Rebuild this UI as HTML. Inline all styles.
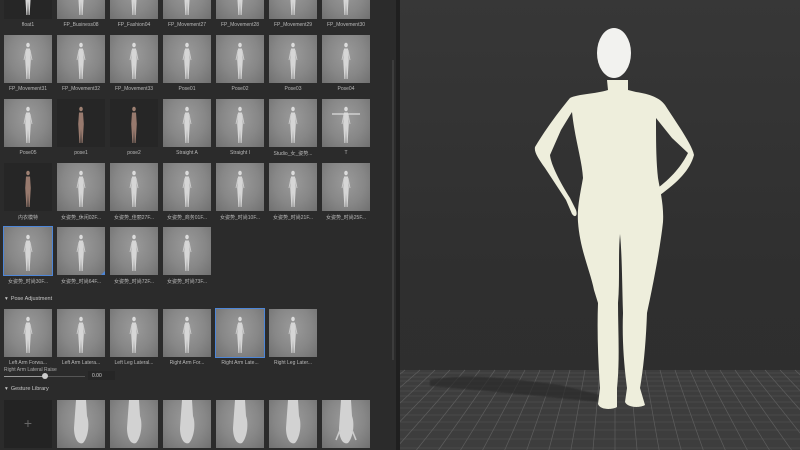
<!DOCTYPE html>
<html><head><meta charset="utf-8"><style>
*{margin:0;padding:0;box-sizing:border-box}
body{width:800px;height:450px;overflow:hidden;background:#2b2b2b;font-family:"Liberation Sans","Noto Sans CJK SC",sans-serif;position:relative}
#panel{position:absolute;left:0;top:0;width:396px;height:450px;background:#2b2b2b;overflow:hidden}
.row{position:absolute;left:4px;display:flex}
.c{width:48px;margin-right:5px}
.t{width:48px;height:48px;background:radial-gradient(ellipse at 50% 40%,#9a9a9a 0%,#878787 55%,#707070 100%);position:relative;overflow:hidden}
.t svg{position:absolute;left:0;top:0;width:48px;height:48px}
.t.d{background:#262626}
.t.sel{outline:1px solid #4d86d8}
.l{font-size:5px;color:#b8b8b8;text-align:center;margin-top:3px;white-space:nowrap;overflow:hidden}
.h{position:absolute;left:5px;font-size:5.5px;color:#c8c8c8}
#div{position:absolute;left:396px;top:0;width:4px;height:450px;background:#1f1f1f}
#sb{position:absolute;left:392px;top:60px;width:2px;height:300px;background:#3c3c3c}
#vp{position:absolute;left:400px;top:0;width:400px;height:450px;background:linear-gradient(#373737,#2f2f2f 60%,#2e2e2e)}
</style></head><body>
<svg width="0" height="0" style="position:absolute">
<defs>
<symbol id="f" viewBox="0 0 48 48"><ellipse cx="24" cy="10" rx="1.8" ry="2.3" fill="#dcdcdc"/><path d="M22 13.5 L26 13.5 L26.8 25 L25.6 44 L24.6 44 L24 30 L23.4 44 L22.4 44 L21.2 25 Z" fill="#d6d6d6"/><path d="M22 15 L20 25 M26 15 L28 25" stroke="#cfcfcf" stroke-width="0.9"/></symbol>
<symbol id="b" viewBox="0 0 48 48"><ellipse cx="24" cy="10" rx="1.8" ry="2.3" fill="#9e8072"/><path d="M22 13.5 L26 13.5 L26.8 25 L25.6 44 L24.6 44 L24 30 L23.4 44 L22.4 44 L21.2 25 Z" fill="#987a6e"/></symbol>
<symbol id="g" viewBox="0 0 48 48"><path d="M19 0 L29 0 L30 16 C33 24 31 38 26 43 C21 45 17 38 17 28 Z" fill="#d2d2d2"/></symbol>
<filter id="bl"><feGaussianBlur stdDeviation="0.6"/></filter>
</defs></svg>
<div id="panel">
<div class="row" style="top:-29px">
<div class="c"><div class="t d"><svg><use href="#f"/></svg></div><div class="l">float1</div></div>
<div class="c"><div class="t"><svg><use href="#f"/></svg></div><div class="l">FP_Business08</div></div>
<div class="c"><div class="t"><svg><use href="#f"/></svg></div><div class="l">FP_Fashion04</div></div>
<div class="c"><div class="t"><svg><use href="#f"/></svg></div><div class="l">FP_Movement27</div></div>
<div class="c"><div class="t"><svg><use href="#f"/></svg></div><div class="l">FP_Movement28</div></div>
<div class="c"><div class="t"><svg><use href="#f"/></svg></div><div class="l">FP_Movement29</div></div>
<div class="c"><div class="t"><svg><use href="#f"/></svg></div><div class="l">FP_Movement30</div></div>
</div>
<div class="row" style="top:35px">
<div class="c"><div class="t"><svg><use href="#f"/></svg></div><div class="l">FP_Movement31</div></div>
<div class="c"><div class="t"><svg><use href="#f"/></svg></div><div class="l">FP_Movement32</div></div>
<div class="c"><div class="t"><svg><use href="#f"/></svg></div><div class="l">FP_Movement33</div></div>
<div class="c"><div class="t"><svg><use href="#f"/></svg></div><div class="l">Pose01</div></div>
<div class="c"><div class="t"><svg><use href="#f"/></svg></div><div class="l">Pose02</div></div>
<div class="c"><div class="t"><svg><use href="#f"/></svg></div><div class="l">Pose03</div></div>
<div class="c"><div class="t"><svg><use href="#f"/></svg></div><div class="l">Pose04</div></div>
</div>
<div class="row" style="top:99px">
<div class="c"><div class="t"><svg><use href="#f"/></svg></div><div class="l">Pose05</div></div>
<div class="c"><div class="t d"><svg><use href="#b"/></svg></div><div class="l">pose1</div></div>
<div class="c"><div class="t d"><svg><use href="#b"/></svg></div><div class="l">pose2</div></div>
<div class="c"><div class="t"><svg><use href="#f"/></svg></div><div class="l">Straight A</div></div>
<div class="c"><div class="t"><svg><use href="#f"/></svg></div><div class="l">Straight I</div></div>
<div class="c"><div class="t"><svg><use href="#f"/></svg></div><div class="l">Studio_女_姿势...</div></div>
<div class="c"><div class="t"><svg><use href="#f"/><path d="M10 15 H38" stroke="#ddd" stroke-width="1.2"/></svg></div><div class="l">T</div></div>
</div>
<div class="row" style="top:163px">
<div class="c"><div class="t d"><svg><use href="#b"/></svg></div><div class="l">内衣模特</div></div>
<div class="c"><div class="t"><svg><use href="#f"/></svg></div><div class="l">女姿势_休闲02F...</div></div>
<div class="c"><div class="t"><svg><use href="#f"/></svg></div><div class="l">女姿势_佳丽27F...</div></div>
<div class="c"><div class="t"><svg><use href="#f"/></svg></div><div class="l">女姿势_商务01F...</div></div>
<div class="c"><div class="t"><svg><use href="#f"/></svg></div><div class="l">女姿势_时尚10F...</div></div>
<div class="c"><div class="t"><svg><use href="#f"/></svg></div><div class="l">女姿势_时尚21F...</div></div>
<div class="c"><div class="t"><svg><use href="#f"/></svg></div><div class="l">女姿势_时尚25F...</div></div>
</div>
<div class="row" style="top:227px">
<div class="c"><div class="t sel"><svg><use href="#f"/></svg></div><div class="l">女姿势_时尚30F...</div></div>
<div class="c"><div class="t"><svg><use href="#f"/><path d="M44 48 L48 44 L48 48Z" fill="#4d86d8"/></svg></div><div class="l">女姿势_时尚64F...</div></div>
<div class="c"><div class="t"><svg><use href="#f"/></svg></div><div class="l">女姿势_时尚72F...</div></div>
<div class="c"><div class="t"><svg><use href="#f"/></svg></div><div class="l">女姿势_时尚73F...</div></div>
</div>
<div class="h" style="top:296px">▾ &nbsp;Pose Adjustment</div>
<div class="row" style="top:309px">
<div class="c"><div class="t"><svg><use href="#f"/></svg></div><div class="l">Left Arm Forwa...</div></div>
<div class="c"><div class="t"><svg><use href="#f"/></svg></div><div class="l">Left Arm Latera...</div></div>
<div class="c"><div class="t"><svg><use href="#f"/></svg></div><div class="l">Left Leg Lateral...</div></div>
<div class="c"><div class="t"><svg><use href="#f"/></svg></div><div class="l">Right Arm For...</div></div>
<div class="c"><div class="t sel"><svg><use href="#f"/></svg></div><div class="l">Right Arm Late...</div></div>
<div class="c"><div class="t"><svg><use href="#f"/></svg></div><div class="l">Right Leg Later...</div></div>
</div>
<div style="position:absolute;left:4px;top:367px;font-size:5px;color:#aaa">Right Arm Lateral Raise</div>
<div style="position:absolute;left:4px;top:376px;width:81px;height:1px;background:#555"></div>
<div style="position:absolute;left:4px;top:376px;width:41px;height:1px;background:#999"></div>
<div style="position:absolute;left:42px;top:373px;width:6px;height:6px;border-radius:3px;background:#ccc"></div>
<div style="position:absolute;left:88px;top:371px;width:27px;height:9px;background:#262626;font-size:5px;color:#ccc;padding:2px 4px">0.00</div>
<div class="h" style="top:386px">▾ &nbsp;Gesture Library</div>
<div class="row" style="top:400px">
<div class="c"><div class="t d" style="background:#232323;color:#666;font-size:14px;text-align:center;line-height:46px">+</div></div>
<div class="c"><div class="t"><svg><use href="#g"/></svg></div></div>
<div class="c"><div class="t"><svg><use href="#g"/></svg></div></div>
<div class="c"><div class="t"><svg><use href="#g"/></svg></div></div>
<div class="c"><div class="t"><svg><use href="#g"/></svg></div></div>
<div class="c"><div class="t"><svg><use href="#g"/></svg></div></div>
<div class="c"><div class="t"><svg><use href="#g"/><path d="M14 40 L18 30 M34 40 L30 30" stroke="#ccc" stroke-width="1.6"/></svg></div></div>
</div>
<div id="sb"></div>
</div>
<div id="div"></div>
<div id="vp">
<svg width="400" height="450" viewBox="400 0 400 450" style="position:absolute;left:0;top:0">
<rect x="400" y="370" width="400" height="80" fill="#3d3d3d"/>
<g stroke="#575757" stroke-width="0.6">
<line x1="400" y1="373" x2="800" y2="373"/><line x1="400" y1="377" x2="800" y2="377"/><line x1="400" y1="381" x2="800" y2="381"/><line x1="400" y1="386" x2="800" y2="386"/><line x1="400" y1="391" x2="800" y2="391"/><line x1="400" y1="396" x2="800" y2="396"/><line x1="400" y1="402" x2="800" y2="402"/><line x1="400" y1="408" x2="800" y2="408"/><line x1="400" y1="415" x2="800" y2="415"/><line x1="400" y1="422" x2="800" y2="422"/><line x1="400" y1="430" x2="800" y2="430"/><line x1="400" y1="439" x2="800" y2="439"/><line x1="400" y1="448" x2="800" y2="448"/>
</g>
<g stroke="#5e5e5e" stroke-width="0.7" id="vl"></g>
<path d="M430 380 C470 372 520 380 560 385 L600 395 L600 402 C560 398 500 392 430 386Z" fill="#2a2a2a" opacity="0.7" filter="url(#bl)"/>
<g fill="#eeeedc">
<path d="M607 80 L608 90 C595 94 578 94 570 98 C560 110 545 130 535 147 C534 152 538 158 545 168 L566 200 L572 214 C575 218 578 216 576 210 L570 198 C560 182 551 165 550 155 L561 130 L572 112 C575 140 582 160 583 178 C580 195 577 208 578 222 C580 250 590 270 594 290 L598 303 C597 330 598 360 600 388 L598 404 C600 410 612 410 617 407 L617 388 C620 360 618 330 618 303 C620 280 618 255 620 234 C622 255 622 280 623 313 C622 340 624 365 627 388 L625 402 C628 408 640 408 645 405 L640 388 C644 365 646 340 647 313 C652 290 660 250 663 222 C664 205 660 190 658 178 C656 160 656 140 656 118 L672 138 L688 153 C682 165 672 178 655 190 C652 194 655 198 660 195 C678 182 690 170 694 155 C692 145 680 128 665 105 C660 98 650 94 636 92 L628 90 L628 80 Z"/>
<ellipse cx="614" cy="53" rx="17" ry="25" fill="#f2f2ef"/>
</g>
</svg>
</div>
<script>
var g=document.getElementById('vl'),s='';
for(var k=-30;k<=14;k++){var x1=615+15*k,x2=615+15*k*250/170;s+='<line x1="'+x1+'" y1="370" x2="'+x2+'" y2="450"/>';}
g.innerHTML=s;
</script>
</body></html>
